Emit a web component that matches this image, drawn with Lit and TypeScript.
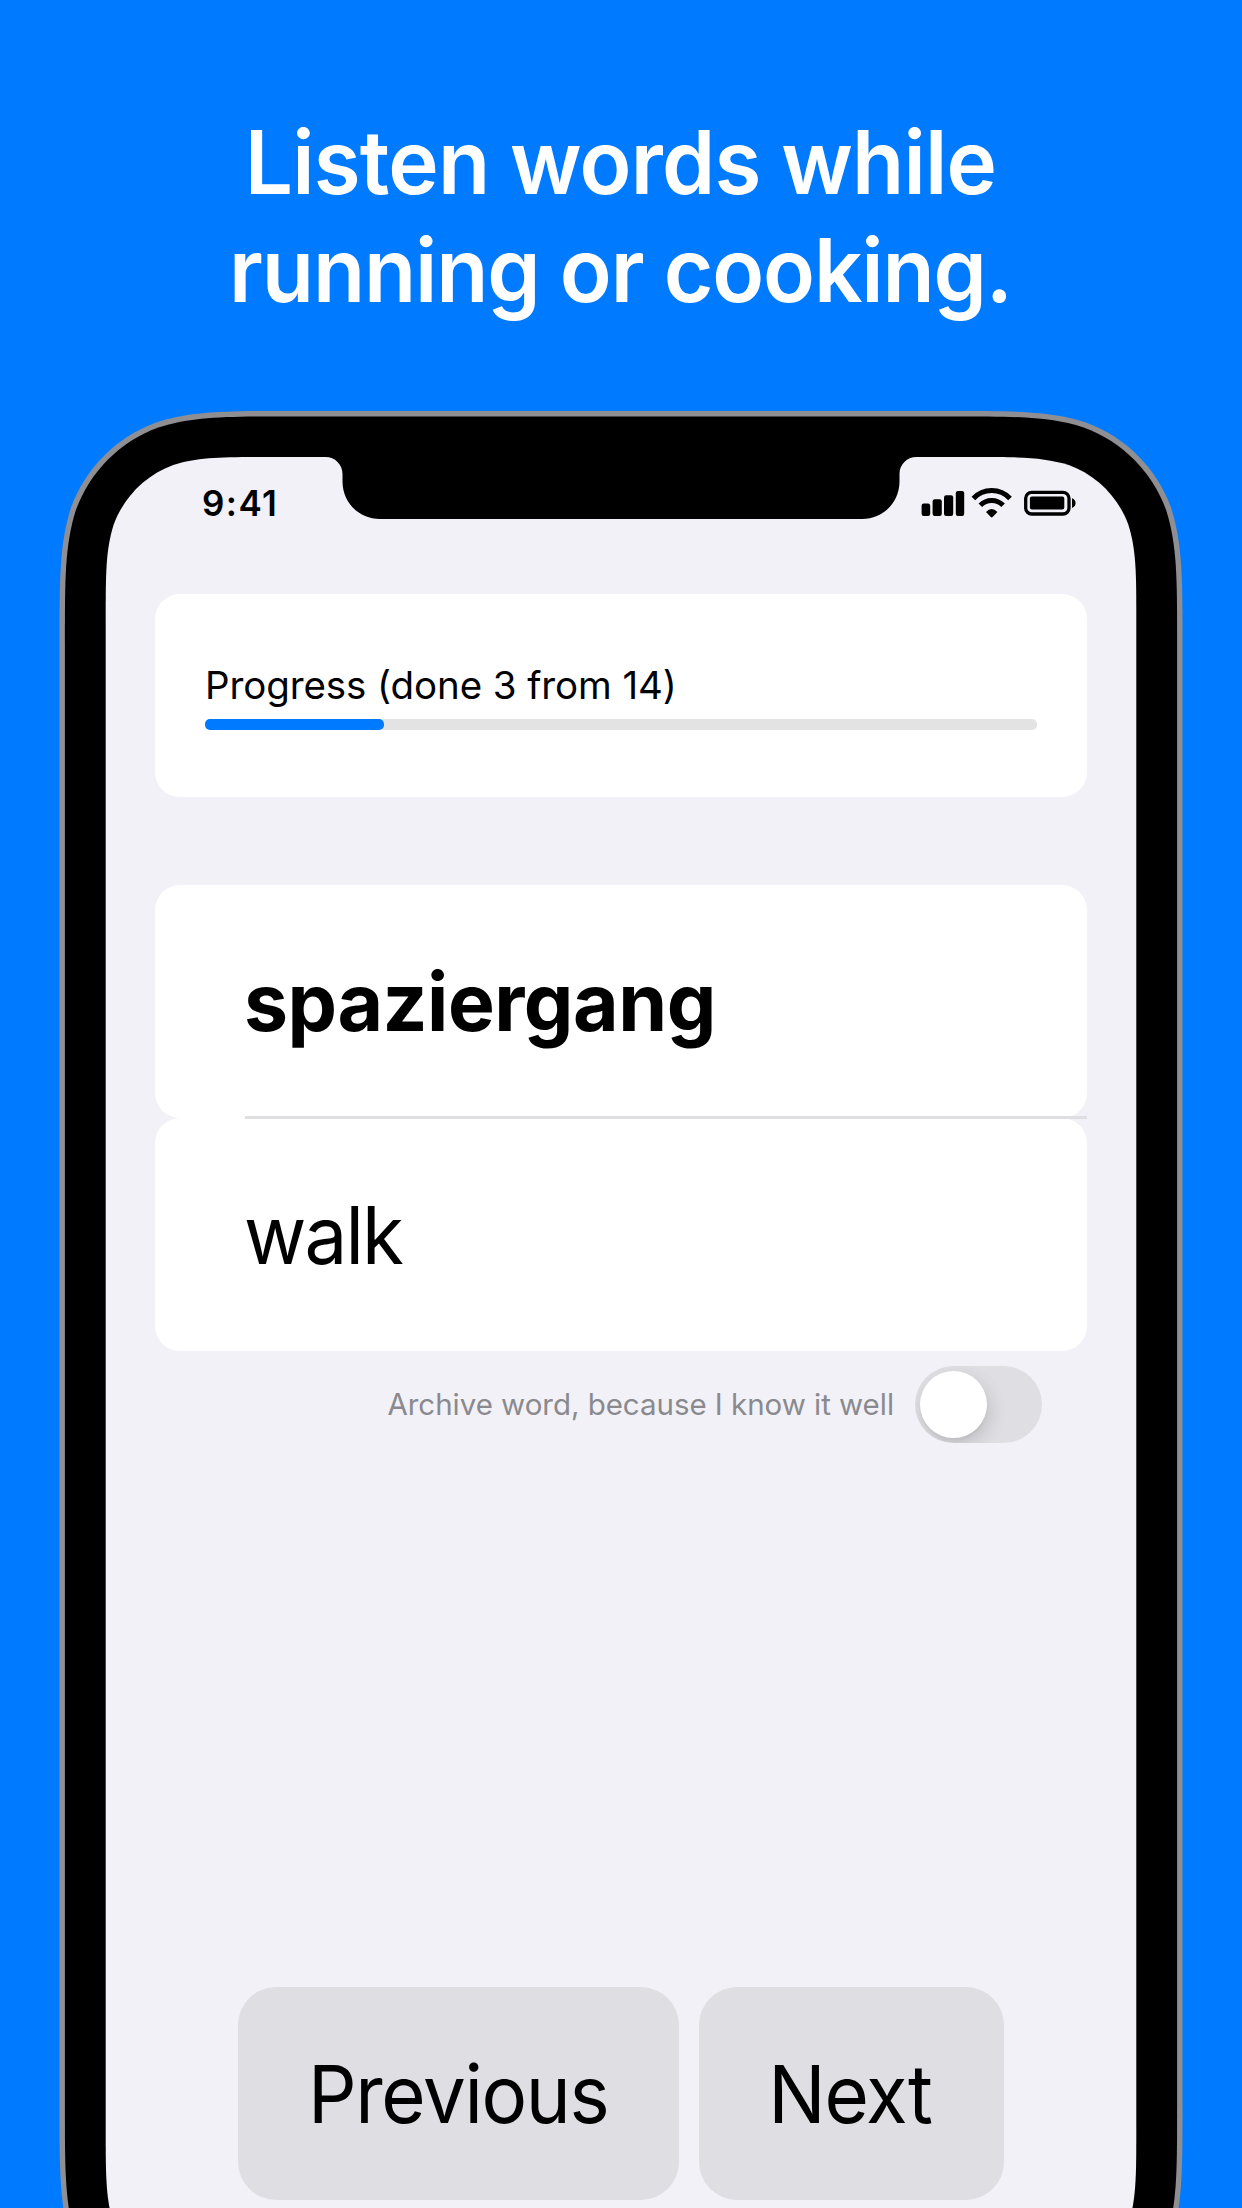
import { LitElement, html, css, svg } from "lit";
import { customElement, property } from "lit/decorators.js";

/** Path of a rectangle with smoothed (continuous-curvature) corners. */
function smoothRect(x: number, y: number, w: number, h: number, r: number): string {
  const a = 1.528665 * r, b = 1.08849 * r, c = 0.868407 * r, d = 0.631494 * r;
  const e = 0.0749114 * r, f = 0.372824 * r, g = 0.16906 * r;
  const X = x + w, Y = y + h;
  return [
    `M${x + a} ${y}H${X - a}`,
    `C${X - b} ${y} ${X - c} ${y} ${X - d} ${y + e}`,
    `C${X - f} ${y + g} ${X - g} ${y + f} ${X - e} ${y + d}`,
    `C${X} ${y + c} ${X} ${y + b} ${X} ${y + a}`,
    `V${Y - a}`,
    `C${X} ${Y - b} ${X} ${Y - c} ${X - e} ${Y - d}`,
    `C${X - g} ${Y - f} ${X - f} ${Y - g} ${X - d} ${Y - e}`,
    `C${X - c} ${Y} ${X - b} ${Y} ${X - a} ${Y}`,
    `H${x + a}`,
    `C${x + b} ${Y} ${x + c} ${Y} ${x + d} ${Y - e}`,
    `C${x + f} ${Y - g} ${x + g} ${Y - f} ${x + e} ${Y - d}`,
    `C${x} ${Y - c} ${x} ${Y - b} ${x} ${Y - a}`,
    `V${y + a}`,
    `C${x} ${y + b} ${x} ${y + c} ${x + e} ${y + d}`,
    `C${x + g} ${y + f} ${x + f} ${y + g} ${x + d} ${y + e}`,
    `C${x + c} ${y} ${x + b} ${y} ${x + a} ${y}Z`,
  ].join("");
}

@customElement("phone-frame")
export class PhoneFrame extends LitElement {
  static styles = css`
    :host { display: block; position: relative; overflow: hidden; }
    .shell { position: absolute; inset: 0; display: block; }
    .screen { position: relative; padding: 46px 46px 0; }
  `;
  render() {
    return html`
      <svg class="shell" width="1124" height="1797" viewBox="-0.5 0 1124 1797" aria-hidden="true">
        <path d=${smoothRect(0, 0, 1123, 1927, 153)} fill="#8e8e93" />
        <path d=${smoothRect(5.4, 5.4, 1112.2, 1916.2, 148)} fill="#000" />
        <path d=${smoothRect(46.2, 46, 1030.6, 1835, 107)} fill="#f2f1f7" />
        <path d="M266 45V46C275.500 46 283 53.500 283 63V70.500C283 91.500 299.500 108 320.500 108H802.500C823.500 108 840 91.500 840 70.500V63C840 53.500 847.500 46 857 46V45Z" fill="#000" />
      </svg>
      <div class="screen"><slot></slot></div>
    `;
  }
}

@customElement("status-bar")
export class StatusBar extends LitElement {
  static styles = css`
    :host { display: flex; align-items: center; justify-content: space-between; height: 92px; padding: 0 61px 0 97px; }
    .time { font-size: 35px; font-weight: 600; letter-spacing: 1.45px; line-height: 1.21; }
    svg { display: block; }
  `;
  render() {
    const bars: [number, number, number][] = [[0.6, 15.6, 8.6], [11.6, 11.3, 9.2], [23, 7.3, 9.2], [34.8, 3, 8.4]];
    return html`
      <span class="time">9:41</span>
      <svg width="155" height="30" viewBox="0 0 155 30" aria-hidden="true">
        ${bars.map(([x, y, w]) => svg`<rect x=${x} y=${y} width=${w} height=${28 - y} rx="2.200" />`)}
        <path d="M52.400 10.500A25.100 25.100 0 0 1 89 10.500" fill="none" stroke="#000" stroke-width="5" />
        <path d="M59.300 17.300A15.900 15.900 0 0 1 82.100 17.300" fill="none" stroke="#000" stroke-width="5" />
        <path d="M65 24.100Q70.700 17.800 76.400 24.100L71.600 29Q70.700 29.900 69.800 29Z" />
        <rect x="104.700" y="4.300" width="43.300" height="21.700" rx="6" fill="none" stroke="#000" stroke-width="3.300" />
        <rect x="108.900" y="8.600" width="34.400" height="12.800" rx="2" />
        <path d="M151 10.200C155.800 11.500 155.800 18.600 151 19.900Z" />
      </svg>
    `;
  }
}

@customElement("progress-card")
export class ProgressCard extends LitElement {
  static styles = css`
    :host { display: block; box-sizing: border-box; height: 202.700px; padding: 68.300px 50px 0 49.600px; background: #fff; border-radius: 25px; }
    .label { font-size: 38.500px; line-height: 46px; letter-spacing: -0.09px; white-space: nowrap; }
    .track { height: 10.500px; margin-top: 11px; border-radius: 5px; background: #e3e3e4; }
    .fill { height: 100%; padding-right: 1px; border-radius: inherit; background: #007aff; }
  `;
  @property({ type: Number }) done = 0;
  @property({ type: Number }) total = 1;
  render() {
    return html`
      <div class="label">Progress (done ${this.done} from ${this.total})</div>
      <div class="track"><div class="fill" style="width:${(this.done / this.total) * 100}%"></div></div>
    `;
  }
}

@customElement("archive-toggle")
export class ArchiveToggle extends LitElement {
  static styles = css`
    :host { display: flex; align-items: center; justify-content: flex-end; gap: 21px; padding-right: 45px; }
    .label { padding-bottom: 2px; font-size: 29.500px; line-height: 36px; letter-spacing: -0.035px; color: #8a8a8e; white-space: nowrap; }
    .switch { box-sizing: border-box; width: 127px; height: 77.300px; padding: 5px; border-radius: 39px; background: #dfdee3; overflow: hidden; }
    .knob { width: 67.300px; height: 67.300px; border-radius: 50%; background: #fff; box-shadow: 3px 7px 18px rgba(0, 0, 0, 0.14), 0 3px 3px rgba(0, 0, 0, 0.04); }
  `;
  render() {
    return html`<span class="label">Archive word, because I know it well</span><div class="switch"><div class="knob"></div></div>`;
  }
}

@customElement("app-root")
export class AppRoot extends LitElement {
  static styles = css`
    :host {
      display: block; box-sizing: border-box; height: 2208px; padding-top: 108px; overflow: hidden;
      background: #007aff; color: #000; font-family: Inter, "Liberation Sans", sans-serif;
    }
    .headline { margin: 0; height: 303px; padding-right: 1px; color: #fff; font-size: 88px; font-weight: 600; line-height: 108px; text-align: center; }
    .line { display: block; transform: scaleX(0.97); white-space: nowrap; }
    .first { letter-spacing: -0.83px; }
    .second { letter-spacing: -1.2px; }
    phone-frame { width: 1124px; height: 1797px; margin: 0 auto; }
    .content { display: flex; flex-direction: column; margin: 45px 50px 0 50.300px; }
    .words { margin-top: 88px; }
    .word { display: flex; align-items: center; height: 233px; padding-left: 89.200px; border-radius: 25px; background: #fff; font-size: 80.200px; line-height: 1.21; }
    .word + .word { position: relative; }
    .word + .word::before { content: ""; position: absolute; left: 89.700px; right: 0; top: -1.500px; height: 2.500px; background: #dfdfe2; }
    .word span { display: block; transform-origin: left; }
    .foreign { font-weight: 700; letter-spacing: -0.48px; transform: scaleX(0.98); }
    .native { letter-spacing: -1.95px; transform: scaleX(0.95); }
    archive-toggle { margin-top: 15.300px; }
    .actions { display: flex; justify-content: center; gap: 20.300px; margin-top: 543.400px; }
    .action { display: flex; align-items: center; justify-content: center; box-sizing: border-box; height: 213px; padding: 0; border: 0; border-radius: 38px; background: #dfdee3; color: inherit; font: inherit; font-size: 80.200px; line-height: 1.21; }
    .action span { display: block; transform: scaleX(0.95); }
    .previous { width: 440.700px; padding-right: 1px; letter-spacing: -1.4px; }
    .next { width: 305.300px; padding-right: 3px; letter-spacing: -1.25px; }
  `;
  render() {
    return html`
      <h1 class="headline"><span class="line first">Listen words while</span><span class="line second">running or cooking.</span></h1>
      <phone-frame>
        <status-bar></status-bar>
        <div class="content">
          <progress-card .done=${3} .total=${14}></progress-card>
          <div class="words">
            <div class="word"><span class="foreign">spaziergang</span></div>
            <div class="word"><span class="native">walk</span></div>
          </div>
          <archive-toggle></archive-toggle>
          <div class="actions">
            <button class="action previous"><span>Previous</span></button>
            <button class="action next"><span>Next</span></button>
          </div>
        </div>
      </phone-frame>
    `;
  }
}
